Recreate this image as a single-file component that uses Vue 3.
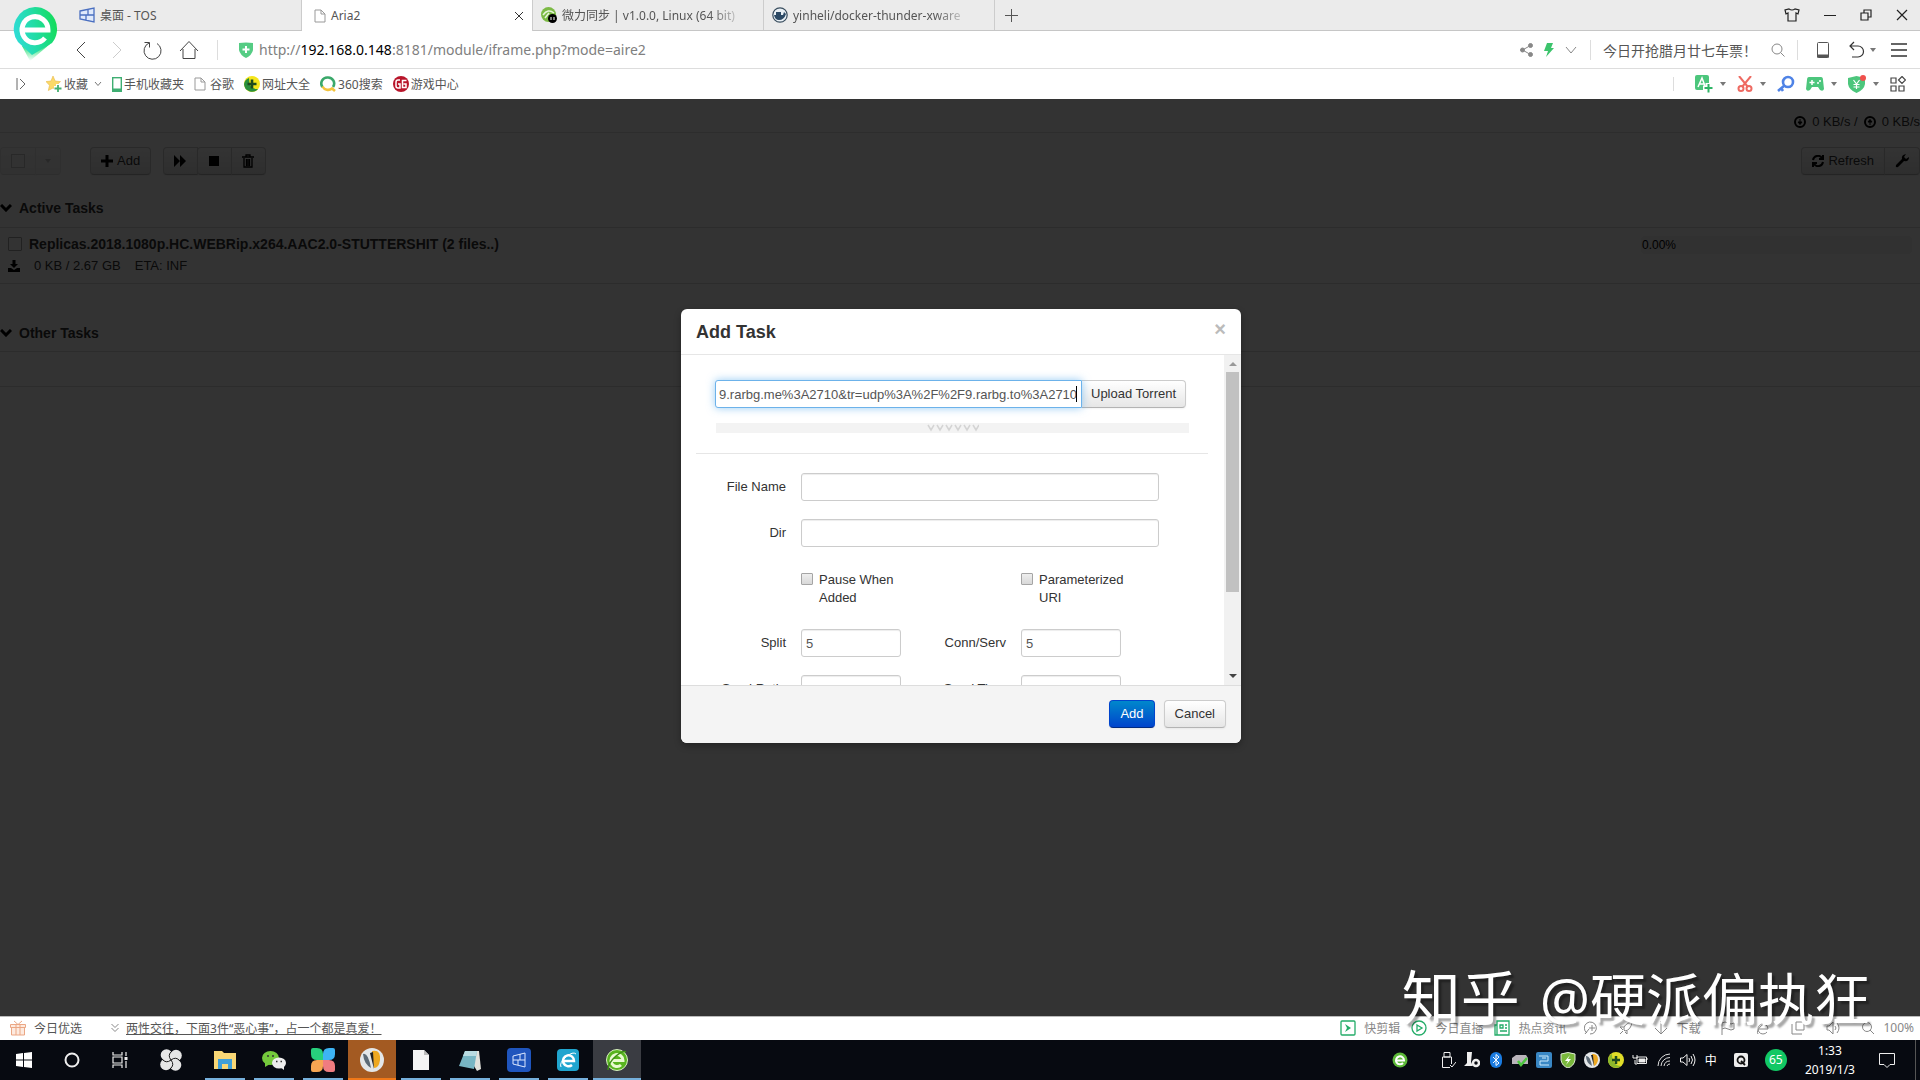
<template>
  <div class="screen">
    <header class="tabs">
      <svg class="logo" viewBox="0 0 46 56" aria-hidden="true">
        <defs>
          <linearGradient id="pin" x1="0" y1="0.6" x2="1" y2="0.4">
            <stop offset="0" stop-color="#2fdcd8" />
            <stop offset="0.5" stop-color="#22dca4" />
            <stop offset="1" stop-color="#14dc5a" />
          </linearGradient>
          <linearGradient id="pinFade" x1="0" y1="0" x2="0" y2="1">
            <stop offset="0" stop-color="#14dc6a" />
            <stop offset="1" stop-color="#14dc6a" stop-opacity="0" />
          </linearGradient>
        </defs>
        <path d="M10 40 L38 38 L18 55 Z" fill="url(#pinFade)" />
        <path d="M23 1 A22 22 0 0 1 40 37 L20 49 L6 36 A22 22 0 0 1 23 1 Z" fill="url(#pin)" />
        <path d="M10 24 H36 A13 13 0 1 0 33 32" fill="none" stroke="#fff" stroke-width="5" />
      </svg>
      <nav class="tab-list">
        <a href="#" class="tab">
          <svg width="16" height="16" viewBox="0 0 16 16" fill="#dfe9fb" stroke="#4a6fc0" stroke-width="1.300">
            <path d="M1 4 L15 1 V15 L1 12 Z M1 8 H15 M7 8 V13 M9 2 V8" />
          </svg>
          <span>桌面 - TOS</span>
        </a>
        <a href="#" class="tab active">
          <svg width="12" height="14" viewBox="0 0 12 14" fill="#fff" stroke="#999">
            <path d="M1 1 H7 L11 5 V13 H1 Z M7 1 V5 H11" />
          </svg>
          <span>Aria2</span>
          <button class="tab-close" aria-label="Close tab">
            <svg width="10" height="10" viewBox="0 0 10 10" stroke="#333"><path d="M1 1 L9 9 M9 1 L1 9" /></svg>
          </button>
        </a>
        <a href="#" class="tab">
          <svg width="16" height="16" viewBox="0 0 16 16">
            <circle cx="7.500" cy="7.500" r="7.500" fill="#7cba45" />
            <path d="M2 8 Q7 1 13 6 M4 11 L8 6" stroke="#e8f5da" stroke-width="1.500" fill="none" />
            <circle cx="11.500" cy="11.500" r="4.500" fill="#000" />
            <path d="M10 10 V13 M13 10 V13" stroke="#fff" />
          </svg>
          <span class="fade">微力同步 | v1.0.0, Linux (64 bit)</span>
        </a>
        <a href="#" class="tab">
          <svg width="16" height="16" viewBox="0 0 16 16">
            <circle cx="8" cy="8" r="7.200" fill="#e9f0f5" stroke="#394d5e" stroke-width="1.200" />
            <path d="M2 8 H11 L12 5 L14 7 Q12 13 7 13 Q3 13 2 8 Z M4 5 H9 V8 H4 Z" fill="#2c4a66" />
          </svg>
          <span class="fade">yinheli/docker-thunder-xware</span>
        </a>
      </nav>
      <button class="new-tab" aria-label="New tab">
        <svg width="14" height="14" viewBox="0 0 14 14" stroke="#555"><path d="M7.500 1 V14 M1 7.500 H14" /></svg>
      </button>
      <div class="window-buttons">
        <button aria-label="Skin">
          <svg width="16" height="14" viewBox="0 0 16 14" fill="none" stroke="#222" stroke-width="1.200">
            <path d="M5 1 Q8 3 11 1 L15 2 L14 6 L12 5 V13 H4 V5 L2 6 L1 2 Z" />
          </svg>
        </button>
        <button aria-label="Minimize">
          <svg width="12" height="12" viewBox="0 0 12 12" stroke="#222"><path d="M0 6.500 H12" /></svg>
        </button>
        <button aria-label="Restore">
          <svg width="12" height="12" viewBox="0 0 12 12" fill="none" stroke="#222" stroke-width="1.200">
            <path d="M1 4 H8 V11 H1 Z M4 4 V1 H11 V8 H8" />
          </svg>
        </button>
        <button aria-label="Close">
          <svg width="12" height="12" viewBox="0 0 12 12" stroke="#222" stroke-width="1.200"><path d="M1 1 L11 11 M11 1 L1 11" /></svg>
        </button>
      </div>
    </header>

    <div class="address">
      <div class="nav-buttons">
        <button aria-label="Back">
          <svg width="20" height="20" viewBox="0 0 20 20"><path d="M14 2 L6 10 L14 18" /></svg>
        </button>
        <button aria-label="Forward" disabled>
          <svg width="20" height="20" viewBox="0 0 20 20"><path d="M6 2 L14 10 L6 18" /></svg>
        </button>
        <button aria-label="Reload">
          <svg width="20" height="20" viewBox="0 0 20 20"><path d="M14 3.500 A8.500 8.500 0 1 1 6 3 M1.500 2.500 H6.500 V7.500" /></svg>
        </button>
        <button aria-label="Home">
          <svg width="20" height="20" viewBox="0 0 20 20"><path d="M1 11 L10 1.500 L19 11 M4 9 V18.500 H16 V9" /></svg>
        </button>
      </div>
      <i class="divider"></i>
      <svg class="shield" width="14" height="16" viewBox="0 0 14 16">
        <path d="M0 1 Q7 0 14 1 V8 Q13 13 7 16 Q1 13 0 8 Z" fill="#55cc84" />
        <path d="M7 4 V11 M3.500 7.500 H10.500" stroke="#fff" stroke-width="2" />
      </svg>
      <div class="url">http://<b>192.168.0.148</b>:8181/module/iframe.php?mode=aire2</div>
      <div class="address-tools">
        <svg width="13" height="14" viewBox="0 0 13 14" fill="#888" stroke="#888">
          <path d="M10.500 2.500 L2.500 7 L10.500 11.500" fill="none" />
          <circle cx="10.500" cy="2.500" r="2" /><circle cx="2.500" cy="7" r="2" /><circle cx="10.500" cy="11.500" r="2" />
        </svg>
        <svg width="10" height="14" viewBox="0 0 10 14"><path d="M3 0 H9 L7 5 H10 L2 14 L4 8 H0 Z" fill="#3cc46c" /></svg>
        <svg width="12" height="8" viewBox="0 0 12 8" fill="none" stroke="#888"><path d="M1 1 L6 7 L11 1" /></svg>
      </div>
      <i class="divider"></i>
      <div class="search">
        <span>今日开抢腊月廿七车票！</span>
        <svg width="14" height="14" viewBox="0 0 14 14" fill="none" stroke="#888"><circle cx="6" cy="6" r="5" /><path d="M9.500 9.500 L13.500 13.500" /></svg>
      </div>
      <i class="divider"></i>
      <div class="menu-tools">
        <svg class="phone" width="14" height="18" viewBox="0 0 14 18"><rect x="1.500" y="1.500" width="11" height="15" rx="1" fill="none" stroke="#555" /><path d="M1 15 H13" stroke="#555" stroke-width="3" /></svg>
        <span class="with-caret">
          <svg width="16" height="18" viewBox="0 0 16 18" fill="none" stroke="#333" stroke-width="1.200"><path d="M5 1 L1 5 L5 9 M1 5 H9 A5.500 5.500 0 0 1 9 16 H3" /></svg>
          <i class="caret"></i>
        </span>
        <svg width="16" height="14" viewBox="0 0 16 14" stroke="#333" stroke-width="1.300"><path d="M0 1 H16 M0 7 H16 M0 13 H16" /></svg>
      </div>
    </div>

    <div class="bookmarks">
      <svg class="expander" width="10" height="12" viewBox="0 0 10 12" fill="none" stroke="#666"><path d="M1 0 V12 M4 1 L9 6 L4 11" /></svg>
      <a href="#">
        <svg width="16" height="16" viewBox="0 0 16 16">
          <path d="M7 0 L9.200 5 L14.500 5.600 L10.500 9.300 L11.500 14.500 L7 12 L2.300 14.500 L3.500 9.300 L0 5.600 L5 5 Z" fill="#fbd968" stroke="#e8b84a" stroke-width="0.600" />
          <path d="M12 8 V16 M8 12 H16" stroke="#fff" stroke-width="4" /><path d="M12 9 V16 M8.500 12.500 H15.500" stroke="#45b070" stroke-width="1.800" />
        </svg>
        <span>收藏</span>
        <svg class="more" width="8" height="6" viewBox="0 0 8 6" fill="none" stroke="#777"><path d="M1 1 L4 4.500 L7 1" /></svg>
      </a>
      <a href="#">
        <svg width="10" height="15" viewBox="0 0 10 15"><rect x="0.700" y="0.700" width="8.600" height="13.600" fill="#fff" stroke="#3fae72" stroke-width="1.400" /><path d="M0 13 H10" stroke="#3fae72" stroke-width="3" /></svg>
        <span>手机收藏夹</span>
      </a>
      <a href="#" class="wide">
        <svg width="12" height="14" viewBox="0 0 12 14" fill="#fff" stroke="#999"><path d="M1 1 H7 L11 5 V13 H1 Z M7 1 V5 H11" /></svg>
        <span>谷歌</span>
      </a>
      <a href="#">
        <svg width="16" height="16" viewBox="0 0 16 16">
          <circle cx="8" cy="8" r="8" fill="#f5e51b" /><path d="M0 8 A8 8 0 0 0 14 13 Q5 14 5 2 A8 8 0 0 0 0 8" fill="#2a8f3c" />
          <path d="M8 3.500 V12.500 M3.500 8 H12.500" stroke="#1d4a1d" stroke-width="2.600" />
        </svg>
        <span>网址大全</span>
      </a>
      <a href="#">
        <svg width="16" height="16" viewBox="0 0 16 16" fill="none" stroke-width="2.600">
          <path d="M2.500 11 A6 6 0 0 1 8 1.500 A6 6 0 0 1 13 11" stroke="#3aa86a" /><path d="M2.500 10.500 A6.300 6.300 0 0 0 12 12.500 L15 15" stroke="#f3c33c" />
        </svg>
        <span>360搜索</span>
      </a>
      <a href="#">
        <svg width="16" height="16" viewBox="0 0 16 16">
          <circle cx="8" cy="8" r="8" fill="#b8152a" />
          <path d="M7 4 H5 Q3 4 3 6 V10 Q3 12 5 12 H7 V8 H5 M13.500 4.500 H9.500 V11.500 H13 V8 H10.500" stroke="#fff" stroke-width="1.500" fill="none" />
        </svg>
        <span>游戏中心</span>
      </a>
      <div class="extensions">
        <i class="divider short"></i>
        <span class="with-caret">
          <svg width="18" height="18" viewBox="0 0 18 18">
            <rect width="14" height="15" rx="2" fill="#4cc67c" /><path d="M3 12 L7 3 L10 11 M4.500 9 H9" stroke="#fff" stroke-width="1.500" fill="none" />
            <path d="M13 8 V18 M8 13 H18" stroke="#fff" stroke-width="5" /><path d="M13.500 9 V17.500 M9.500 13 H17.500" stroke="#2fb566" stroke-width="2" />
          </svg>
          <i class="caret"></i>
        </span>
        <span class="with-caret">
          <svg width="16" height="16" viewBox="0 0 16 16" fill="none" stroke="#ee6a62" stroke-width="2">
            <path d="M2 0 L11 11 M14 0 L5 11" /><circle cx="4" cy="12.500" r="2.500" /><circle cx="12" cy="12.500" r="2.500" />
          </svg>
          <i class="caret"></i>
        </span>
        <svg width="18" height="18" viewBox="0 0 18 18" fill="none" stroke="#4f83e6" stroke-width="2.600"><circle cx="11" cy="7" r="5" /><path d="M7.500 10.500 L1 16 M4 13 L6 16" /></svg>
        <span class="with-caret">
          <svg width="18" height="16" viewBox="0 0 18 16">
            <path d="M3 1 H15 Q17 1 17 4 L18 13 Q17 16 14 14 L12 11 H6 L4 14 Q1 16 0 13 L1 4 Q1 1 3 1 Z" fill="#4cc67c" />
            <path d="M6 4 V9 M3.500 6.500 H8.500 M11 7 H13 M13 5 H15" stroke="#fff" stroke-width="1.500" />
          </svg>
          <i class="caret"></i>
        </span>
        <span class="with-caret">
          <svg width="18" height="18" viewBox="0 0 18 18">
            <path d="M0 3 L8.500 1 L17 3 V9 Q16 15 8.500 18 Q1 15 0 9 Z" fill="#4cc67c" />
            <path d="M5.500 5 L8.500 9 L11.500 5 M8.500 9 V14 M5.500 9.500 H11.500 M5.500 12 H11.500" stroke="#fff" stroke-width="1.200" fill="none" />
            <circle cx="15" cy="3" r="3" fill="#f0504c" />
          </svg>
          <i class="caret"></i>
        </span>
        <svg width="16" height="16" viewBox="0 0 16 16" fill="none" stroke="#444" stroke-width="1.200">
          <path d="M1 2 H6 V7 H1 Z M1 10 H6 V15 H1 Z M9 10 H14 V15 H9 Z M12 0.500 L15.500 4 L12 7.500 L8.500 4 Z" />
        </svg>
      </div>
    </div>

    <main class="page">
      <div class="speeds">
        <svg width="12" height="12" viewBox="0 0 12 12"><circle cx="6" cy="6" r="5" fill="none" stroke="#000" stroke-width="2" /><path d="M6 3 V6 M4 6 H8 L6 8.500 Z" stroke="#000" /></svg>
        <span>0 KB/s /</span>
        <svg width="12" height="12" viewBox="0 0 12 12"><circle cx="6" cy="6" r="5" fill="none" stroke="#000" stroke-width="2" /><path d="M6 9 V6 M4 6 H8 L6 3.500 Z" stroke="#000" /></svg>
        <span>0 KB/s</span>
      </div>
      <div class="toolbar">
        <div class="btn-group muted">
          <button class="btn" aria-label="Select all"><i class="box"></i></button>
          <button class="btn slim" aria-label="Select menu"><i class="caret"></i></button>
        </div>
        <div class="btn-group">
          <button class="btn">
            <svg width="12" height="12" viewBox="0 0 12 12" stroke="#000" stroke-width="3"><path d="M6 0 V12 M0 6 H12" /></svg>
            Add
          </button>
        </div>
        <div class="btn-group">
          <button class="btn" aria-label="Resume"><svg width="12" height="12" viewBox="0 0 12 12"><path d="M0 0 L6 6 V0 L12 6 L6 12 V6 L0 12 Z" /></svg></button>
          <button class="btn" aria-label="Stop"><svg width="12" height="12" viewBox="0 0 12 12"><path d="M1 1 H11 V11 H1 Z" /></svg></button>
          <button class="btn" aria-label="Remove">
            <svg width="12" height="14" viewBox="0 0 12 14" fill="none" stroke="#000" stroke-width="1.300"><path d="M0 3 H12 M4 3 V1 H8 V3 M2 4 V13 H10 V4 M4.500 5 V12 M6 5 V12 M7.500 5 V12" /></svg>
          </button>
        </div>
        <div class="btn-group right">
          <button class="btn">
            <svg width="12" height="12" viewBox="0 0 12 12" fill="none" stroke="#000" stroke-width="2"><path d="M1 5 A5 5 0 0 1 10 3 M11 0 V4 H7 M11 7 A5 5 0 0 1 2 9 M1 12 V8 H5" /></svg>
            Refresh
          </button>
          <button class="btn" aria-label="Settings"><svg width="14" height="14" viewBox="0 0 14 14"><path d="M1 11 L7 5 Q6 1 11 0 L9 3 L11 5 L14 3 Q14 8 9 7 L3 13 Q0 14 1 11 Z" /></svg></button>
        </div>
      </div>

      <section class="tasks">
        <h2>
          <svg width="12" height="8" viewBox="0 0 12 8" fill="none" stroke="#000" stroke-width="3"><path d="M1 1 L6 6 L11 1" /></svg>
          Active Tasks
        </h2>
        <div class="task">
          <div class="task-main">
            <label class="task-name"><input type="checkbox" />Replicas.2018.1080p.HC.WEBRip.x264.AAC2.0-STUTTERSHIT (2 files..)</label>
            <p class="task-meta">
              <svg width="12" height="12" viewBox="0 0 12 12"><path d="M4.500 0 H7.500 V4 H10 L6 8 L2 4 H4.500 Z M0 8 H3 L6 10 L9 8 H12 V12 H0 Z" /></svg>
              <span>0 KB / 2.67 GB</span><span>ETA: INF</span>
            </p>
          </div>
          <div class="progress">0.00%</div>
        </div>
      </section>
      <section class="tasks">
        <h2>
          <svg width="12" height="8" viewBox="0 0 12 8" fill="none" stroke="#000" stroke-width="3"><path d="M1 1 L6 6 L11 1" /></svg>
          Other Tasks
        </h2>
        <div class="no-tasks"></div>
      </section>

      <div v-if="isModalOpen" class="backdrop">
        <form class="modal" @submit.prevent="closeModal">
          <div class="modal-header">
            <h3>Add Task</h3>
            <button type="button" class="close" aria-label="Close" @click="closeModal">×</button>
          </div>
          <div class="modal-body">
            <div class="fields">
              <div class="uri">
                <div class="uri-box">
                  <input v-model="uri" type="text" aria-label="URI" />
                  <i class="cursor"></i>
                </div>
                <button type="button" class="btn">Upload Torrent</button>
              </div>
              <div class="more-bar">
                <svg width="52" height="8" viewBox="0 0 52 8" fill="none" stroke="#d4d4d4" stroke-width="1.500">
                  <path d="M1 1 L4 6 L7 1 M10 1 L13 6 L16 1 M19 1 L22 6 L25 1 M28 1 L31 6 L34 1 M37 1 L40 6 L43 1 M46 1 L49 6 L52 1" />
                </svg>
              </div>
              <hr />
              <div class="row">
                <label for="fileName">File Name</label>
                <input id="fileName" v-model="task.fileName" type="text" class="long" />
              </div>
              <div class="row">
                <label for="dir">Dir</label>
                <input id="dir" v-model="task.dir" type="text" class="long" />
              </div>
              <div class="row checks">
                <label class="check"><input v-model="task.pause" type="checkbox" /><span>Pause When Added</span></label>
                <label class="check"><input v-model="task.parameterized" type="checkbox" /><span>Parameterized URI</span></label>
              </div>
              <div class="row">
                <label for="split">Split</label>
                <input id="split" v-model="task.split" type="text" />
                <label for="conn">Conn/Serv</label>
                <input id="conn" v-model="task.conn" type="text" />
              </div>
              <div class="row">
                <label for="ratio">Seed Ratio</label>
                <input id="ratio" v-model="task.ratio" type="text" />
                <label for="time">Seed Time</label>
                <input id="time" v-model="task.time" type="text" />
              </div>
            </div>
            <div class="scrollbar">
              <i class="up"></i>
              <i class="thumb"></i>
              <i class="down"></i>
            </div>
          </div>
          <div class="modal-footer">
            <button type="submit" class="btn primary">Add</button>
            <button type="button" class="btn" @click="closeModal">Cancel</button>
          </div>
        </form>
      </div>
    </main>

    <div class="status">
      <svg width="16" height="16" viewBox="0 0 16 16" fill="#fdeadf" stroke="#eba784">
        <path d="M0.500 4.500 H15.500 V7.500 H0.500 Z M1.500 7.500 H14.500 V15 H1.500 Z M6 4.500 V15 M10 4.500 V15 M8 4.500 L4 1 M8 4.500 L12 1" />
      </svg>
      <span class="picks">今日优选</span>
      <svg width="8" height="10" viewBox="0 0 8 10" fill="none" stroke="#888"><path d="M0.500 1 L4 4.500 L7.500 1 M0.500 5 L4 8.500 L7.500 5" /></svg>
      <a href="#" class="news">两性交往，下面3件“恶心事”，占一个都是真爱！</a>
      <div class="status-tools">
        <a href="#">
          <svg width="16" height="16" viewBox="0 0 16 16"><rect x="1" y="1" width="14" height="14" rx="1" fill="none" stroke="#23ac68" stroke-width="1.300" /><path d="M5 4 L11 8 L5 12 L7 8 Z" fill="#23ac68" /></svg>
          快剪辑
        </a>
        <a href="#">
          <svg width="16" height="16" viewBox="0 0 16 16" fill="none" stroke="#23ac68" stroke-width="1.300"><circle cx="8" cy="8" r="7" /><path d="M6 5 L11 8 L6 11 Z" /></svg>
          今日直播
        </a>
        <a href="#">
          <svg width="16" height="16" viewBox="0 0 16 16" fill="none" stroke="#23ac68" stroke-width="1.300"><path d="M3 1 H15 V15 H1 V5 H3 Z M3 5 V15 M6 5 H9 V8 H6 Z M11 5 H13 M11 8 H13 M6 11 H13" /></svg>
          热点资讯
        </a>
        <div class="small-tools">
          <svg viewBox="0 0 14 14"><path d="M3 12 A6 6 0 1 1 6 13 M1 13 L5 8 M8 4 V10 M5 7 H11" /></svg>
          <svg viewBox="0 0 14 14"><path d="M5 9 Q4 3 13 1 Q12 9 6 10 Z M5 6 L1 6 L4 9 M8 10 L8 13 L6 11 M4 10 L1 13" /></svg>
          <span><svg viewBox="0 0 14 14"><path d="M7 0 V13 M1 7 L7 13 L13 7" /></svg>下载</span>
          <svg viewBox="0 0 14 14"><path d="M1 14 V2 Q4 0 7 2 T13 2 V8 Q10 10 7 8 T1 8" /></svg>
          <svg viewBox="0 0 14 14"><path d="M3 8 H12 A5 5 0 1 0 11 11 M2 13 Q0 10 5 5 Q11 0 13 2" /></svg>
          <svg viewBox="0 0 14 14"><path d="M5 1 H13 V9 H5 Z M1 3 V13 H11" /></svg>
          <svg viewBox="0 0 14 14"><path d="M1 5 H3 L7 1 V13 L3 9 H1 Z M9 5 Q11 7 9 9 M11 2 Q15 7 11 12" /></svg>
          <span><svg viewBox="0 0 14 14"><circle cx="6" cy="6" r="4.500" /><path d="M9 9 L13 13" /></svg>100%</span>
        </div>
      </div>
    </div>

    <footer class="taskbar">
      <button aria-label="Start"><svg width="16" height="16" viewBox="0 0 16 16" fill="#fff"><path d="M0 2 L7 1 V7.500 H0 Z M8 1 L16 0 V7.500 H8 Z M0 8.500 H7 V15 L0 14 Z M8 8.500 H16 V16 L8 15 Z" /></svg></button>
      <button aria-label="Cortana"><svg width="16" height="16" viewBox="0 0 16 16" fill="none" stroke="#eee" stroke-width="2"><circle cx="8" cy="8" r="6.500" /></svg></button>
      <button aria-label="Task view"><svg width="16" height="16" viewBox="0 0 16 16" fill="none" stroke="#eee" stroke-width="1.200"><path d="M1 0 V3 H10 V0 M1 5 H10 V11 H1 Z M1 16 V13 H10 V16 M14 0 V4 M14 9 V16" /><path d="M14 5 V8" stroke-width="3" /></svg></button>
      <button class="petals" aria-label="Petals">
        <svg width="22" height="22" viewBox="0 0 22 22" fill="#e6e6e6">
          <circle cx="6.500" cy="6" r="5.800" /><circle cx="16" cy="6.500" r="5.800" /><circle cx="15.500" cy="16" r="5.800" /><circle cx="6" cy="15.500" r="5.800" />
          <rect x="6" y="6" width="10" height="10" />
          <path d="M11 11 Q7 6 12 2 M11 11 Q16 7 20 12 M11 11 Q15 16 10 20 M11 11 Q6 15 2 10" fill="none" stroke="#1a1a1a" />
        </svg>
      </button>
      <div class="apps">
        <button class="open" aria-label="Explorer">
          <svg width="22" height="20" viewBox="0 0 22 20"><path d="M0 1 H8 L10 3 H22 V19 H0 Z" fill="#f8d775" /><path d="M4 9 H18 V19 H14 V14 H8 V19 H4 Z" fill="#3f9fd8" /></svg>
        </button>
        <button class="open" aria-label="WeChat">
          <svg width="24" height="20" viewBox="0 0 24 20"><ellipse cx="8.500" cy="8" rx="8.500" ry="7" fill="#74c93c" /><path d="M3 12 L3 17 L8 14 Z" fill="#74c93c" /><ellipse cx="17" cy="13" rx="7" ry="5.500" fill="#eee" /><path d="M18 17 L22 20 L22 15 Z" fill="#eee" /><path d="M5 6 h2 M10 6 h2 M14 11.500 h1.500 M18.500 11.500 h1.500" stroke="#333" stroke-width="1.600" /></svg>
        </button>
        <button class="open" aria-label="Clover">
          <svg width="24" height="24" viewBox="0 0 24 24">
            <path d="M0 2 Q0 0 2 0 H6 Q12 0 12 6 V12 H6 Q0 12 0 6 Z" fill="#27cf7c" />
            <path d="M24 2 Q24 0 22 0 H18 Q12 0 12 6 V12 H18 Q24 12 24 6 Z" fill="#3db4f5" />
            <path d="M0 22 Q0 24 2 24 H6 Q12 24 12 18 V12 H6 Q0 12 0 18 Z" fill="#f7a552" />
            <path d="M24 22 Q24 24 22 24 H18 Q12 24 12 18 V12 H18 Q24 12 24 18 Z" fill="#f07c80" />
          </svg>
        </button>
        <button class="open alert" aria-label="Thunder">
          <svg width="24" height="24" viewBox="0 0 24 24"><circle cx="12" cy="12" r="12" fill="#e3e6e8" /><path d="M3 6 Q8 4 11 20 Q4 16 3 6 Z" fill="#5c6a76" /><path d="M12 3 Q21 1 20 12 Q19 20 14 20 Z" fill="#eea820" /><path d="M10 5 L13 4 L14 21 Z" fill="#222" /></svg>
        </button>
        <button class="open" aria-label="Document">
          <svg width="16" height="20" viewBox="0 0 16 20"><path d="M0 0 H11 L16 5 V20 H0 Z" fill="#f4f4f4" /><path d="M11 0 V5 H16 Z" fill="#bbb" /></svg>
        </button>
        <button class="open" aria-label="Notepad">
          <svg width="22" height="22" viewBox="0 0 22 22"><path d="M6 2 H20 L22 20 L18 22 Z" fill="#e2e2dc" /><path d="M6 2 H18 L15 20 L0 17 Z" fill="#78b6c4" /><path d="M6 2 H18 L17 7 H4 Z" fill="#b9dce2" /></svg>
        </button>
        <button class="open" aria-label="TOS">
          <svg width="24" height="24" viewBox="0 0 24 24"><rect width="24" height="24" rx="4" fill="#1f55bd" /><path d="M6 8 L18 5 V19 L6 16 Z M6 12 H18 M11 12 V17 M13 6 V12" fill="none" stroke="#dce8ff" /></svg>
        </button>
        <button class="open" aria-label="Browser">
          <svg width="22" height="22" viewBox="0 0 22 22"><rect width="22" height="22" rx="4" fill="#20a5cf" /><path d="M6 12 H17 A5.500 5.500 0 1 0 15 16" fill="none" stroke="#fff" stroke-width="2.500" /><path d="M4 18 Q2 14 9 8 Q16 2 19 5" fill="none" stroke="#fff" /></svg>
        </button>
        <button class="open current" aria-label="360 Browser">
          <svg width="22" height="22" viewBox="0 0 22 22"><circle cx="11" cy="11" r="10.500" fill="#58b41f" stroke="#d8f0c0" /><path d="M5 11.500 H17 A6 6 0 1 0 15 16" fill="none" stroke="#e8fad0" stroke-width="3" /><path d="M2 21 Q2 14 10 7 Q17 1 20 3" fill="none" stroke="#3d8f14" stroke-width="1.500" /></svg>
        </button>
      </div>
      <div class="tray">
        <svg class="lone" viewBox="0 0 16 16"><circle cx="8" cy="8" r="7.500" fill="#5cb838" /><path d="M4 8.500 H12 A4 4 0 1 0 11 11" fill="none" stroke="#fff" stroke-width="2" /></svg>
        <svg viewBox="0 0 16 16" fill="none" stroke="#eee"><path d="M4 0.500 H10 V5 H4 Z M10 15.500 H2.500 V5 H11.500 V12 M10 13 L12 15 L16 10" /></svg>
        <svg viewBox="0 0 16 16" fill="#eee"><path d="M3 0 H8 L7 10 L9 14 H0 L3 11 Z" /><circle cx="12" cy="11" r="3" fill="none" stroke="#eee" stroke-width="2.500" /></svg>
        <svg viewBox="0 0 16 16"><rect x="2" width="12" height="16" rx="6" fill="#1a7be0" /><path d="M5 5 L11 11 L8 13.500 V2.500 L11 5 L5 11" fill="none" stroke="#fff" /></svg>
        <svg viewBox="0 0 16 16"><path d="M0 6 L4 3 H14 L16 6 V12 H0 Z" fill="#b9b4bb" /><path d="M6 9 L9 13 L15 6" fill="none" stroke="#4cc63f" stroke-width="2.500" /></svg>
        <svg viewBox="0 0 16 16"><rect width="16" height="16" rx="2" fill="#3987c4" /><path d="M3 4 H12 V9 H4 V13 H13 M6 6 H10" fill="none" stroke="#cbe9fb" /></svg>
        <svg viewBox="0 0 16 16"><path d="M1 2 Q8 -1 15 2 V8 Q14 14 8 16 Q2 14 1 8 Z" fill="#79b83c" stroke="#dfe8d6" /><path d="M10 3 L5 9 H8 L6 13 L11 7 H8 Z" fill="#fff" /></svg>
        <svg viewBox="0 0 16 16"><circle cx="8" cy="8" r="8" fill="#e3e6e8" /><path d="M2 4 Q6 3 8 14 Q2 11 2 4 Z" fill="#5c6a76" /><path d="M8 2 Q14 1 14 8 Q13 13 10 14 Z" fill="#eea820" /><path d="M7 3 L9 3 L10 14 Z" fill="#222" /></svg>
        <svg viewBox="0 0 16 16"><circle cx="8" cy="8" r="8" fill="#e0dd28" /><path d="M0 8 A8 8 0 0 0 13 14 Q4 14 4 2 A8 8 0 0 0 0 8" fill="#8cb82c" /><path d="M8 4 V12 M4 8 H12" stroke="#1d4a1d" stroke-width="2.500" /></svg>
        <svg viewBox="0 0 16 16" fill="none" stroke="#eee"><path d="M5 5 H14.500 V11.500 H5 Z M14.500 7 H16 M3 8 V12 H5 M1 3 V6 H5 V3" /><path d="M7 7 H13 V10 H7 Z" fill="#eee" /></svg>
        <svg viewBox="0 0 16 16" fill="none" stroke="#ddd"><path d="M2 14 A12 12 0 0 1 14 2 M5 14 A9 9 0 0 1 14 5.500 M8 14 A6 6 0 0 1 14 9 M11 14 A3 3 0 0 1 14 12" /></svg>
        <svg viewBox="0 0 16 16" fill="none" stroke="#eee"><path d="M0.500 6 H3 L7 2.500 V13.500 L3 10 H0.500 Z M9 6 Q10 8 9 10 M11 4 Q14 8 11 12 M13 2 Q17 8 13 14" /></svg>
        <span class="ime">中</span>
        <svg class="quick" viewBox="0 0 16 16"><rect x="1" y="1" width="14" height="14" rx="2" fill="#eee" /><circle cx="8" cy="8" r="3.500" fill="none" stroke="#111" stroke-width="1.800" /><path d="M8 9 L12 13" stroke="#111" stroke-width="1.800" /></svg>
        <span class="score">65</span>
        <div class="clock"><span>1:33</span><span>2019/1/3</span></div>
        <svg class="notice" viewBox="0 0 16 16" fill="none" stroke="#eee"><path d="M0.500 1.500 H15.500 V12.500 H11 L8 15.500 L5 12.500 H0.500 Z" /></svg>
        <i class="peek"></i>
      </div>
    </footer>

    <div class="watermark"><span class="brand">知乎</span><span>@硬派偏执狂</span></div>
  </div>
</template>

<script setup>
import { ref } from 'vue'

const isModalOpen = ref(true)

const uri = ref('9.rarbg.me%3A2710&tr=udp%3A%2F%2F9.rarbg.to%3A2710')

const task = ref({
  fileName: '',
  dir: '',
  pause: false,
  parameterized: false,
  split: '5',
  conn: '5',
  ratio: '0',
  time: ''
})

const closeModal = () => {
  isModalOpen.value = false
}
</script>

<style>
body {
  margin: 0;
}
</style>

<style scoped>
.screen {
  position: relative;
  display: flex;
  flex-direction: column;
  min-height: 100vh;
  overflow: hidden;
  font-family: 'Noto Sans', 'Noto Sans CJK SC', sans-serif;
  font-size: 12px;
  color: #555;
  background: #fff;
}

.screen *,
.screen *::before {
  box-sizing: border-box;
}

svg {
  display: block;
  flex: none;
}

a {
  color: inherit;
  text-decoration: none;
}

button {
  padding: 0;
  border: none;
  background: none;
  font: inherit;
  color: inherit;
}

.divider {
  flex: none;
  width: 1px;
  height: 20px;
  background: #ddd;
}

.divider.short {
  height: 14px;
}

.caret {
  flex: none;
  border: 3px solid transparent;
  border-top: 4px solid #777;
  border-bottom: none;
}

.with-caret {
  display: flex;
  align-items: center;
  gap: 7px;
}

/* tabs */
.tabs {
  display: flex;
  height: 31px;
  padding-left: 71px;
  background: #ebebeb;
  border-bottom: 1px solid #c6c6c6;
}

.logo {
  position: absolute;
  top: 6px;
  left: 12px;
  z-index: 2;
  width: 46px;
  height: 56px;
}

.tab-list {
  display: flex;
}

.tab {
  display: flex;
  align-items: center;
  gap: 5px;
  width: 231px;
  height: 30px;
  padding: 0 8px;
  border-right: 1px solid #ccc;
  white-space: nowrap;
}

.tab.active {
  height: 31px;
  padding-left: 12px;
  background: #fff;
}

.tab-close {
  margin-left: auto;
}

.fade {
  -webkit-mask-image: linear-gradient(90deg, #000 85%, rgba(0, 0, 0, 0.3));
  mask-image: linear-gradient(90deg, #000 85%, rgba(0, 0, 0, 0.3));
}

.new-tab {
  padding: 0 9px;
}

.window-buttons {
  display: flex;
  align-items: center;
  gap: 24px;
  margin-left: auto;
  padding-right: 12px;
}

/* address bar */
.address {
  display: flex;
  align-items: center;
  height: 38px;
  border-bottom: 1px solid #ddd;
}

.nav-buttons {
  display: flex;
  padding: 0 10px 0 63px;
}

.nav-buttons button {
  padding: 0 8px;
}

.nav-buttons svg {
  fill: none;
  stroke: #444;
}

.nav-buttons button:disabled svg {
  stroke: #ccc;
}

.shield {
  margin: 0 6px 0 21px;
}

.url {
  flex: 1;
  font-size: 14px;
  color: #808080;
}

.url b {
  font-weight: 400;
  color: #000;
}

.address-tools {
  display: flex;
  align-items: center;
  gap: 11px;
  margin-right: 13px;
}

.search {
  display: flex;
  align-items: center;
  gap: 14px;
  padding: 0 12px;
  font-size: 14px;
}

.menu-tools {
  display: flex;
  align-items: center;
  gap: 15px;
  padding: 0 13px 0 18px;
}

.menu-tools .with-caret {
  gap: 5px;
}

.phone {
  margin-right: 4px;
}

/* bookmarks */
.bookmarks {
  display: flex;
  align-items: center;
  gap: 10px;
  height: 30px;
  padding: 0 14px 0 16px;
}

.bookmarks a {
  display: flex;
  align-items: center;
  gap: 2px;
}

.bookmarks .wide {
  gap: 4px;
}

.expander {
  margin-right: 10px;
}

.more {
  margin-left: 4px;
}

.extensions {
  display: flex;
  align-items: center;
  gap: 11px;
  margin-left: auto;
}

.extensions .divider {
  margin-right: 10px;
}

/* aria2 page */
.page {
  position: relative;
  flex: 1;
  font-family: 'Liberation Sans', Arial, sans-serif;
  font-size: 13px;
  line-height: 18px;
  color: #333;
}

.speeds {
  display: flex;
  align-items: center;
  justify-content: flex-end;
  gap: 6px;
  height: 34px;
  padding-top: 12px;
  border-bottom: 1px solid #e0e0e0;
}

.toolbar {
  display: flex;
  padding-top: 14px;
}

.btn-group {
  display: flex;
  margin-right: 12px;
}

.btn-group.muted {
  margin-right: 29px;
  opacity: 0.4;
}

.btn-group.right {
  margin-left: auto;
  margin-right: 0;
}

.btn {
  display: flex;
  align-items: center;
  gap: 4px;
  height: 28px;
  padding: 0 10px;
  border: 1px solid #ccc;
  border-bottom-color: #b3b3b3;
  border-radius: 4px;
  background: linear-gradient(#fff, #e6e6e6);
  box-shadow: 0 1px 2px rgba(0, 0, 0, 0.05);
  color: #333;
}

.btn-group .btn + .btn {
  margin-left: -1px;
  border-radius: 0 4px 4px 0;
}

.btn-group .btn:not(:last-child) {
  border-radius: 4px 0 0 4px;
}

.btn-group .btn {
  min-width: 35px;
}

.btn-group .btn.slim {
  min-width: 26px;
  padding: 0 9px;
}

.box {
  width: 14px;
  height: 14px;
  border: 1px solid #777;
}

.tasks {
  margin-bottom: 38px;
}

.tasks h2 {
  display: flex;
  align-items: center;
  gap: 7px;
  height: 53px;
  margin: 0;
  padding-top: 14px;
  border-bottom: 1px solid #ddd;
  font-size: 14px;
  font-weight: 700;
}

.tasks + .tasks h2 {
  height: 30px;
  padding: 0 0 8px;
}

.no-tasks {
  height: 35px;
  border-bottom: 1px solid #ddd;
}

.task {
  display: flex;
  height: 56px;
  padding: 6px 8px 0;
  border-bottom: 1px solid #ddd;
}

.task-main {
  flex: 1;
}

.task-name {
  display: flex;
  align-items: center;
  gap: 7px;
  height: 20px;
  font-size: 14px;
  font-weight: 700;
}

input[type='checkbox'] {
  appearance: none;
  flex: none;
  width: 12px;
  height: 12px;
  margin: 0;
  border: 1px solid #a5a5a5;
  border-radius: 1px;
  background: linear-gradient(#eee, #d8d8d8);
}

.task-name input[type='checkbox'] {
  width: 14px;
  height: 14px;
  background: #fff;
}

.task-meta {
  display: flex;
  align-items: center;
  gap: 14px;
  margin: 3px 0 0;
}

.progress {
  width: 271px;
  height: 18px;
  margin-top: 2px;
  padding-left: 1px;
  border-radius: 4px;
  background: #f4f4f4;
  font-size: 12px;
  color: #000;
}

.backdrop {
  position: absolute;
  inset: 0;
  display: flex;
  align-items: flex-start;
  justify-content: center;
  padding: 210px 0 0 2px;
  background: rgba(0, 0, 0, 0.8);
}

/* modal */
.modal {
  width: 560px;
  border-radius: 6px;
  background: #fff;
  box-shadow: 0 3px 7px rgba(0, 0, 0, 0.3);
  overflow: hidden;
}

.modal-header {
  display: flex;
  align-items: center;
  justify-content: space-between;
  height: 46px;
  padding: 0 15px;
  border-bottom: 1px solid #e6e6e6;
}

.modal-header h3 {
  margin: 0;
  font-size: 18px;
}

.close {
  padding-bottom: 6px;
  font-size: 20px;
  font-weight: 700;
  color: #bbb;
}

.modal-body {
  display: flex;
  height: 330px;
}

.fields {
  flex: 1;
  padding: 25px 16px 0 15px;
  overflow: hidden;
}

.uri {
  display: flex;
  padding-left: 19px;
}

.uri-box {
  position: relative;
  width: 367px;
}

.cursor {
  position: absolute;
  top: 6px;
  right: 5px;
  width: 1px;
  height: 16px;
  background: #000;
}

input[type='text'] {
  width: 100px;
  height: 28px;
  padding: 0 4px;
  border: 1px solid #ccc;
  border-radius: 3px;
  background: #fff;
  box-shadow: inset 0 1px 1px rgba(0, 0, 0, 0.075);
  font: inherit;
  color: #555;
}

.uri-box input[type='text'] {
  width: 100%;
  padding: 0 3px;
  border-color: #6cb2ea;
  border-radius: 3px 0 0 3px;
  box-shadow: 0 0 8px rgba(82, 168, 236, 0.6);
  outline: none;
}

.uri .btn {
  padding: 0 9px;
  border-left: none;
  border-radius: 0 4px 4px 0;
}

.more-bar {
  display: flex;
  align-items: center;
  justify-content: center;
  width: 473px;
  height: 10px;
  margin: 15px 0 0 20px;
  background: #f3f3f3;
}

hr {
  height: 1px;
  margin: 20px 0 19px;
  border: none;
  background: #e6e6e6;
}

.row {
  display: flex;
  align-items: center;
  margin-bottom: 18px;
}

.row > label {
  width: 90px;
  margin-right: 15px;
  text-align: right;
}

.row input + label {
  width: 105px;
}

.row .long {
  width: 358px;
}

.row.checks {
  gap: 120px;
  padding: 6px 0 4px 105px;
}

.row .check {
  display: flex;
  gap: 6px;
  width: 100px;
  margin: 0;
  text-align: left;
}

.check input[type='checkbox'] {
  margin-top: 2px;
}

.scrollbar {
  display: flex;
  flex-direction: column;
  align-items: center;
  width: 17px;
  background: #f1f1f1;
}

.up {
  margin: 7px 0 6px;
  border: 4px solid transparent;
  border-top: none;
  border-bottom: 4px solid #999;
}

.thumb {
  width: 13px;
  height: 220px;
  background: #c1c1c1;
}

.down {
  margin: auto 0 7px;
  border: 4px solid transparent;
  border-top: 4px solid #444;
  border-bottom: none;
}

.modal-footer {
  display: flex;
  justify-content: flex-end;
  gap: 9px;
  padding: 14px 15px 15px;
  border-top: 1px solid #ddd;
  background: #f4f4f4;
}

.btn.primary {
  border-color: #04c #04c #002a80;
  background: linear-gradient(#08c, #04c);
  color: #fff;
}

/* browser status bar */
.status {
  display: flex;
  align-items: center;
  height: 24px;
  padding: 0 6px 2px 10px;
  border-top: 1px solid #bbb;
}

.picks {
  margin: 0 29px 0 8px;
}

.news {
  margin-left: 7px;
  text-decoration: underline;
}

.status-tools {
  display: flex;
  gap: 11px;
  margin-left: auto;
  color: #888;
}

.status-tools a,
.small-tools span {
  display: flex;
  align-items: center;
  gap: 8px;
}

.small-tools {
  display: flex;
  align-items: center;
  gap: 21px;
  margin-left: 7px;
}

.small-tools svg {
  width: 14px;
  height: 14px;
  fill: none;
  stroke: #888;
}

/* taskbar */
.taskbar {
  display: flex;
  height: 40px;
  background: #070a11;
  color: #fff;
}

.taskbar button {
  display: flex;
  align-items: center;
  justify-content: center;
  width: 48px;
  height: 40px;
}

.taskbar .petals {
  margin: 0 6px 0 3px;
}

.apps {
  display: flex;
  gap: 1px;
}

.apps .open {
  position: relative;
}

.open::before {
  content: '';
  position: absolute;
  right: 4px;
  bottom: 0;
  left: 4px;
  height: 2px;
  background: #76b0dc;
}

.alert {
  background: #a35a22;
}

.current {
  background: #3a3c42;
}

.alert::before,
.current::before {
  right: 0;
  left: 0;
}

.alert::before {
  background: #f07818;
}

.tray {
  display: flex;
  align-items: center;
  gap: 8px;
  margin-left: auto;
  padding-right: 4px;
}

.tray svg {
  width: 16px;
  height: 16px;
}

.tray .lone {
  margin-right: 24px;
}

.ime {
  width: 14px;
  text-align: center;
}

.tray .quick {
  margin: 0 8px 0 7px;
}

.score {
  width: 22px;
  border-radius: 11px;
  background: #12c864;
  line-height: 22px;
  text-align: center;
}

.clock {
  display: flex;
  flex-direction: column;
  align-items: center;
  margin: 0 16px 0 10px;
  line-height: 19px;
}

.tray .notice {
  margin-right: 12px;
}

.peek {
  width: 1px;
  height: 40px;
  background: #555;
}

.watermark {
  position: absolute;
  right: 50px;
  bottom: 42px;
  display: flex;
  align-items: baseline;
  gap: 20px;
  font-size: 56px;
  line-height: 80px;
  color: #fff;
  text-shadow: 3px 3px 2px rgba(0, 0, 0, 0.35);
  white-space: nowrap;
}

.brand {
  font-size: 59px;
}
</style>
